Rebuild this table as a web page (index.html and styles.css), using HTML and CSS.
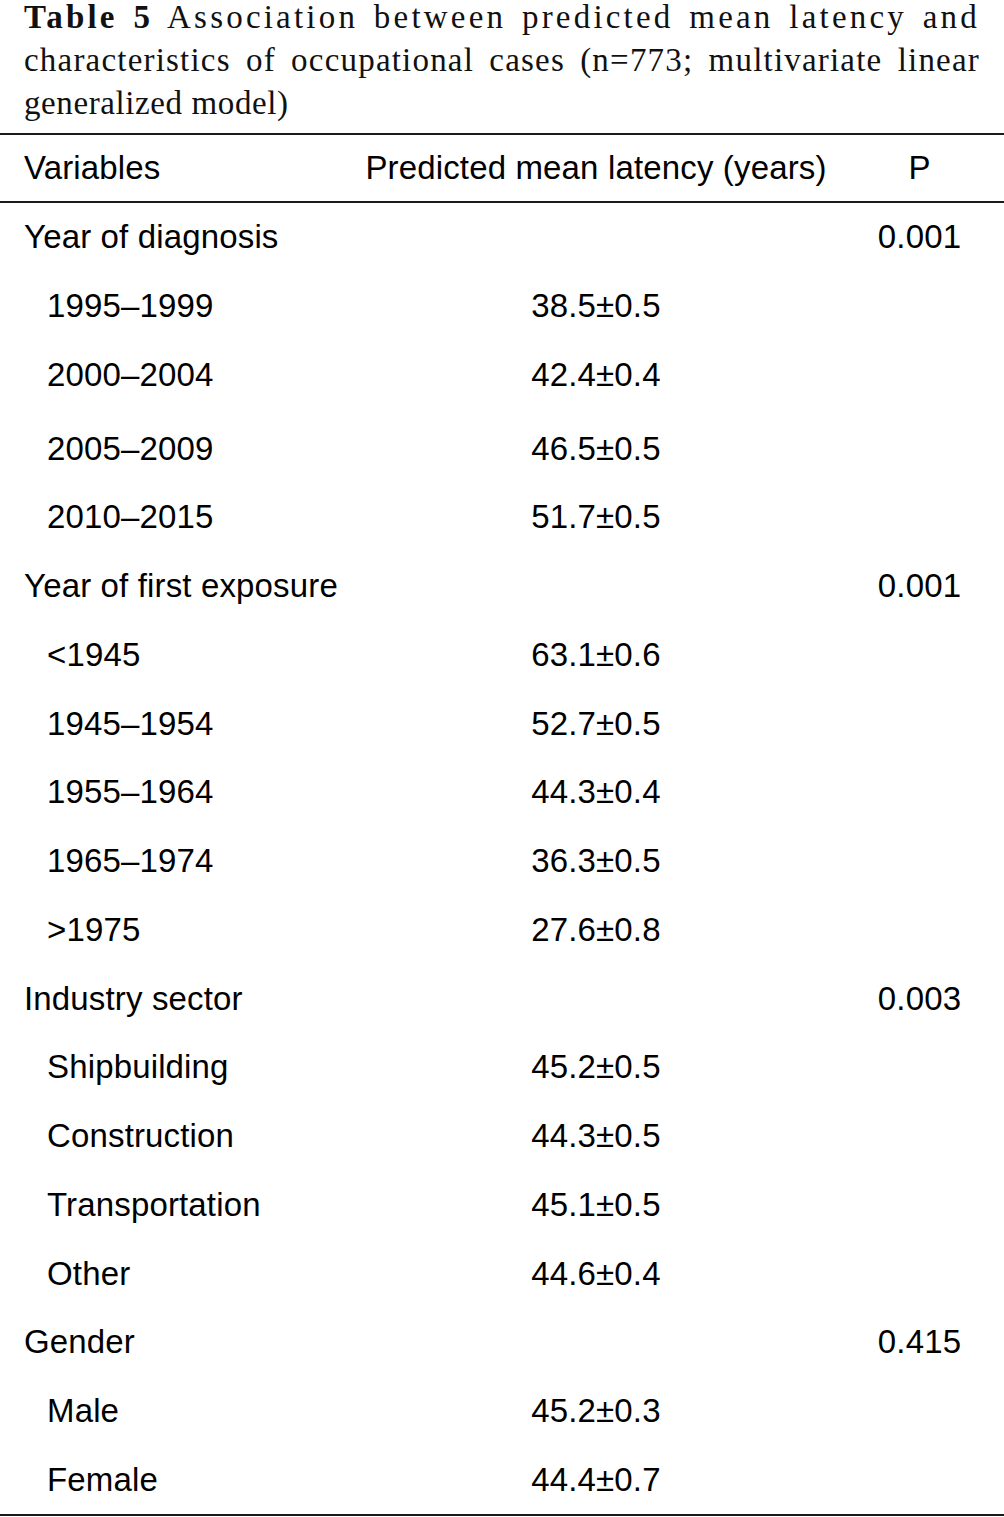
FILE: index.html
```html
<!DOCTYPE html>
<html lang="en">
<head>
<meta charset="utf-8">
<title>Table 5</title>
<link rel="stylesheet" href="styles.css">
</head>
<body>
<div class="caption">
  <span class="cap-line cap-first"><b>Table 5</b> Association between predicted mean latency and</span>
  <span class="cap-line cap-second">characteristics of occupational cases (n=773; multivariate linear</span>
  <span class="cap-line cap-last">generalized model)</span>
</div>
<div class="table">
  <div class="row head">
    <div class="c1">Variables</div>
    <div class="c2">Predicted mean latency (years)</div>
    <div class="c3">P</div>
  </div>
  <div class="body">
    <div class="row"><div class="c1">Year of diagnosis</div><div class="c2"></div><div class="c3">0.001</div></div>
    <div class="row"><div class="c1 sub">1995–1999</div><div class="c2">38.5±0.5</div><div class="c3"></div></div>
    <div class="row"><div class="c1 sub">2000–2004</div><div class="c2">42.4±0.4</div><div class="c3"></div></div>
    <div class="row tall"><div class="c1 sub">2005–2009</div><div class="c2">46.5±0.5</div><div class="c3"></div></div>
    <div class="row"><div class="c1 sub">2010–2015</div><div class="c2">51.7±0.5</div><div class="c3"></div></div>
    <div class="row"><div class="c1">Year of first exposure</div><div class="c2"></div><div class="c3">0.001</div></div>
    <div class="row"><div class="c1 sub">&lt;1945</div><div class="c2">63.1±0.6</div><div class="c3"></div></div>
    <div class="row"><div class="c1 sub">1945–1954</div><div class="c2">52.7±0.5</div><div class="c3"></div></div>
    <div class="row"><div class="c1 sub">1955–1964</div><div class="c2">44.3±0.4</div><div class="c3"></div></div>
    <div class="row"><div class="c1 sub">1965–1974</div><div class="c2">36.3±0.5</div><div class="c3"></div></div>
    <div class="row"><div class="c1 sub">&gt;1975</div><div class="c2">27.6±0.8</div><div class="c3"></div></div>
    <div class="row"><div class="c1">Industry sector</div><div class="c2"></div><div class="c3">0.003</div></div>
    <div class="row"><div class="c1 sub">Shipbuilding</div><div class="c2">45.2±0.5</div><div class="c3"></div></div>
    <div class="row"><div class="c1 sub">Construction</div><div class="c2">44.3±0.5</div><div class="c3"></div></div>
    <div class="row"><div class="c1 sub">Transportation</div><div class="c2">45.1±0.5</div><div class="c3"></div></div>
    <div class="row"><div class="c1 sub">Other</div><div class="c2">44.6±0.4</div><div class="c3"></div></div>
    <div class="row"><div class="c1">Gender</div><div class="c2"></div><div class="c3">0.415</div></div>
    <div class="row"><div class="c1 sub">Male</div><div class="c2">45.2±0.3</div><div class="c3"></div></div>
    <div class="row"><div class="c1 sub">Female</div><div class="c2">44.4±0.7</div><div class="c3"></div></div>
  </div>
</div>
</body>
</html>
```

FILE: styles.css
```css
html, body {
  margin: 0;
  padding: 0;
  background: #ffffff;
}

body {
  width: 1004px;
  color: #000;
}

.caption {
  margin: -4px 24px 0 24px;
  font-family: "Liberation Serif", "Times New Roman", serif;
  font-size: 33px;
  line-height: 43px;
  color: #111;
}

.cap-line {
  display: block;
  white-space: nowrap;
  text-align: justify;
  text-align-last: justify;
}

.cap-first {
  letter-spacing: 3.2px;
}

.cap-second {
  letter-spacing: 1.2px;
}

.cap-last {
  text-align: left;
  text-align-last: left;
  letter-spacing: 0.6px;
}

.table {
  margin-top: 8px;
  border-top: 2px solid #1a1a1a;
  border-bottom: 2px solid #1a1a1a;
  font-family: "Liberation Sans", Arial, sans-serif;
  font-size: 33px;
  line-height: 38px;
  letter-spacing: 0.15px;
  color: #000;
}

.row {
  display: grid;
  grid-template-columns: 357px 478px 1fr;
  align-items: center;
  height: 68.75px;
}

.row.head {
  height: 66px;
  border-bottom: 2px solid #1a1a1a;
}

.row.tall {
  box-sizing: border-box;
  height: 73.75px;
  padding-top: 5px;
}

.c1 {
  padding-left: 24px;
  white-space: nowrap;
}

.c1.sub {
  padding-left: 47px;
}

.c2, .c3 {
  text-align: center;
  white-space: nowrap;
}
```
